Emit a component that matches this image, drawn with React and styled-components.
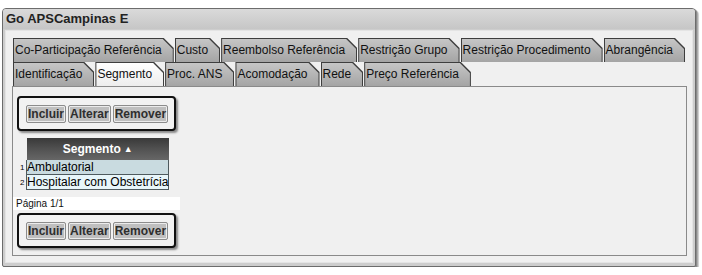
import React from "react";
import styled, { createGlobalStyle } from "styled-components";

const Global = createGlobalStyle`
  html, body { margin: 0; padding: 0; background: #ffffff; }
  body { font-family: "Liberation Sans", Arial, sans-serif; }
`;

const Page = styled.div`
  padding: 8px 0 0 2px;
`;

const Window = styled.div`
  width: 692px;
  height: 257px;
  border: 1px solid #6c6c6c;
  border-radius: 4px 4px 2px 2px;
  background: #cdcdcd;
  box-shadow: 1px 1px 0 #8a8a8a, 2px 2px 1px #a8a8a8, 3px 3px 1px #d0d0d0;
  display: flex;
  flex-direction: column;
`;

const TitleBar = styled.div`
  height: 20px;
  line-height: 20px;
  padding-left: 3px;
  font-weight: bold;
  font-size: 13px;
  color: #222;
  background: linear-gradient(#dadada, #c6c6c6);
  border-radius: 3px 3px 0 0;
`;

const Body = styled.div`
  flex: 1;
  margin: 1px 2px 3px 2px;
  background: #f0f0f0;
  border: 1px solid #e4e4e4;
  padding: 7px 5px 6px 6px;
  display: flex;
  flex-direction: column;
`;

const TabRow = styled.div`
  display: flex;
  gap: 1px;
  margin-left: 1px;
  height: 24px;
`;

const Tab = styled.div`
  background: #3e3e3e;
  padding: 1px 1px 0 1px;
  height: 24px;
  box-sizing: border-box;
  clip-path: polygon(0 0, calc(100% - 10px) 0, 100% 10px, 100% 100%, 0 100%);
`;

const TabFace = styled.div`
  height: 23px;
  line-height: 22px;
  padding: 0 11px 0 1px;
  font-size: 12px;
  color: #111;
  white-space: nowrap;
  background: ${(p) =>
    p.$active
      ? "linear-gradient(#ffffff, #ededed)"
      : "linear-gradient(#c6c6c6, #a4a4a4)"};
  clip-path: polygon(0 0, calc(100% - 10px) 0, 100% 10px, 100% 100%, 0 100%);
`;

const Panel = styled.div`
  flex: 1;
  border: 1px solid #8a8a8a;
  background: #f0f0f0;
  padding: 9px 0 0 0;
  display: flex;
  flex-direction: column;
  align-items: flex-start;
`;

const ButtonBox = styled.div`
  margin: ${(p) => (p.$second ? "3px" : "0")} 0 0 4px;
  border: 2px solid #111;
  border-radius: 4px;
  background: #f2f2f2;
  padding: 7px 6px 6px 7px;
  display: flex;
  gap: 2px;
  box-shadow: 2px 2px 2px #8a8a8a;
`;

const Button = styled.button`
  height: 18px;
  padding: 0 1px;
  margin: 0;
  border: 1px solid #8c8c8c;
  border-radius: 2px;
  box-shadow: inset 0 0 0 1px #ececec;
  background: #bfbfbf;
  font-family: "Liberation Sans", Arial, sans-serif;
  font-weight: bold;
  font-size: 12px;
  line-height: 14px;
  color: #2e2e2e;
`;

const Grid = styled.table`
  margin: 7px 0 0 6px;
  border-collapse: collapse;
  font-size: 12px;
`;

const HeaderCell = styled.th`
  height: 22px;
  padding: 0 4px;
  background: linear-gradient(#393939, #565656 60%, #666666);
  color: #ffffff;
  font-weight: bold;
  font-size: 12px;
  text-align: center;
`;

const Arrow = styled.span`
  font-size: 9px;
  margin-left: 3px;
  vertical-align: 1px;
`;

const NumCell = styled.td`
  font-size: 8px;
  padding: 0 1px 0 1px;
  width: 5px;
  vertical-align: middle;
  color: #000;
`;

const DataCell = styled.td`
  height: 14px;
  line-height: 14px;
  padding: 0;
  border: 1px solid #4e5a5e;
  border-top: none;
  background: ${(p) => (p.$alt ? "#e8f6fa" : "#c9dbe0")};
  color: #000;
  white-space: nowrap;
`;

const Pager = styled.div`
  margin-top: 7px;
  width: 164px;
  height: 13px;
  line-height: 13px;
  padding-left: 3px;
  background: #ffffff;
  font-size: 10px;
  color: #111;
`;

const tabsRow1 = [
  "Co-Participação Referência",
  "Custo",
  "Reembolso Referência",
  "Restrição Grupo",
  "Restrição Procedimento",
  "Abrangência",
];
const tabsRow2 = [
  "Identificação",
  "Segmento",
  "Proc. ANS",
  "Acomodação",
  "Rede",
  "Preço Referência",
];

const rows = ["Ambulatorial", "Hospitalar com Obstetrícia"];

function Buttons({ second }) {
  return (
    <ButtonBox $second={second}>
      <Button>Incluir</Button>
      <Button>Alterar</Button>
      <Button>Remover</Button>
    </ButtonBox>
  );
}

export default function App() {
  return (
    <Page>
      <Global />
      <Window>
        <TitleBar>Go APSCampinas E</TitleBar>
        <Body>
          <TabRow>
            {tabsRow1.map((t) => (
              <Tab key={t}>
                <TabFace>{t}</TabFace>
              </Tab>
            ))}
          </TabRow>
          <TabRow>
            {tabsRow2.map((t) => (
              <Tab key={t}>
                <TabFace $active={t === "Segmento"}>{t}</TabFace>
              </Tab>
            ))}
          </TabRow>
          <Panel>
            <Buttons />
            <Grid>
              <thead>
                <tr>
                  <th />
                  <HeaderCell>
                    Segmento<Arrow>▲</Arrow>
                  </HeaderCell>
                </tr>
              </thead>
              <tbody>
                {rows.map((r, i) => (
                  <tr key={r}>
                    <NumCell>{i + 1}</NumCell>
                    <DataCell $alt={i % 2 === 1}>{r}</DataCell>
                  </tr>
                ))}
              </tbody>
            </Grid>
            <Pager>Página 1/1</Pager>
            <Buttons second />
          </Panel>
        </Body>
      </Window>
    </Page>
  );
}
